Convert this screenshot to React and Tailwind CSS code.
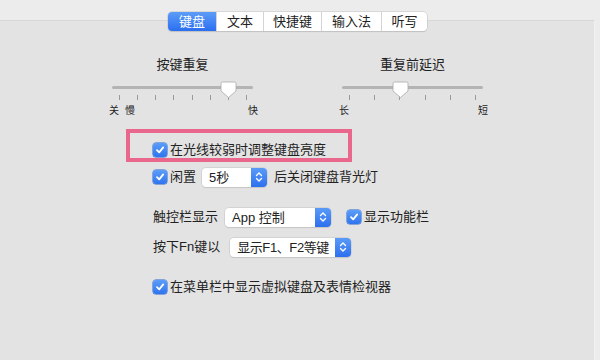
import React from "react";

const FONT = { fontFamily: '"Liberation Sans", "Noto Sans CJK SC", sans-serif' };

function Check() {
  return (
    <div className="w-[14px] h-[14px] rounded-[3px] bg-gradient-to-b from-[#5b9df9] to-[#2f74ee] flex items-center justify-center shrink-0 shadow-[0_0_0_0.5px_#2a64d0]">
      <svg width="10" height="10" viewBox="0 0 10 10">
        <path d="M2 5.2 L4.2 7.4 L8.2 2.4" fill="none" stroke="white" strokeWidth="1.8" strokeLinecap="round" strokeLinejoin="round" />
      </svg>
    </div>
  );
}

function Select({ label, width, tight }) {
  return (
    <div className={`h-[19px] rounded-[4px] bg-white flex items-stretch shadow-[0_0_0_0.5px_#c4c4c4,0_1px_1px_rgba(0,0,0,0.12)] ${width}`}>
      <div className={`flex-1 min-w-0 pl-[7px] flex items-center text-[13px] leading-[19px] text-[#222] whitespace-nowrap overflow-hidden ${tight ? "tracking-[-0.4px]" : ""}`}>{label}</div>
      <div className="w-[16px] shrink-0 rounded-r-[4px] bg-gradient-to-b from-[#5a9bf8] to-[#2c6fee] flex items-center justify-center">
        <svg width="8" height="12" viewBox="0 0 8 12">
          <path d="M1.5 4.5 L4 2 L6.5 4.5 M1.5 7.5 L4 10 L6.5 7.5" fill="none" stroke="white" strokeWidth="1.4" strokeLinecap="round" strokeLinejoin="round" />
        </svg>
      </div>
    </div>
  );
}

function Slider({ title, ticks, thumb, tickInset, left, right, extraLeft }) {
  return (
    <div className="w-[141px] flex flex-col">
      <div className="h-[18px] leading-[18px] text-[13px] text-center text-[#222]">{title}</div>
      <div className="relative h-[27px] mt-[4px]">
        <div className="absolute left-0 right-0 top-[8px] h-[3px] rounded-full bg-[#b4b4b4]" />
        <div className={`absolute top-[17px] h-[5px] flex justify-between ${tickInset}`}>
          {Array.from({ length: ticks }).map((_, i) => (
            <div key={i} className="w-[1px] h-[5px] bg-[#9a9a9a]" />
          ))}
        </div>
        <div className={`absolute top-[3px] ${thumb}`}>
          <svg width="17" height="18" viewBox="0 0 17 18">
            <path d="M1 2.5 Q1 1 2.5 1 H14.5 Q16 1 16 2.5 V10 L8.5 16.5 L1 10 Z" fill="white" stroke="#a9a9a9" strokeWidth="0.8" />
          </svg>
        </div>
      </div>
      <div className="h-[12px] leading-[12px] text-[10px] text-[#222] flex justify-between -ml-[3px] -mr-[5px]">
        <div className="flex gap-[6px]">
          <span>{left}</span>
          {extraLeft && <span>{extraLeft}</span>}
        </div>
        <span>{right}</span>
      </div>
    </div>
  );
}

export default function App() {
  const tabs = [
    { t: "键盘", w: "w-[48px]", a: true },
    { t: "文本", w: "w-[47px]" },
    { t: "快捷键", w: "w-[58px]" },
    { t: "输入法", w: "w-[60px]" },
    { t: "听写", w: "w-[46px]" },
  ];
  return (
    <div className="relative w-[600px] h-[360px] bg-[#ececec] overflow-hidden" style={FONT}>
      <div className="mt-[20px] w-[595px] h-[345px] bg-[#e3e3e3] border-t border-r border-t-[#d6d6d6] border-r-[#f2f2f2]">
        <div className="pt-[35px] pl-[112px] flex gap-[89px]">
          <Slider title="按键重复" ticks={8} thumb="left-[108px]" tickInset="left-[7px] right-[6px]" left="关" extraLeft="慢" right="快" />
          <Slider title="重复前延迟" ticks={6} thumb="left-[50px]" tickInset="left-[7px] right-[7px]" left="长" right="短" />
        </div>

        <div className="relative ml-[153px] mt-[23px] h-[20px] flex items-center gap-[3px] text-[13px] text-[#222]">
          <Check />
          <span className="leading-[20px]">在光线较弱时调整键盘亮度</span>
          <div className="absolute -left-[27px] -top-[11px] w-[226px] h-[33px] border-[4px] border-[#e9668c]" />
        </div>

        <div className="ml-[153px] mt-[7px] h-[20px] flex items-center text-[13px] text-[#222]">
          <Check />
          <span className="ml-[3px] leading-[20px]">闲置</span>
          <div className="ml-[6px]"><Select label="5秒" width="w-[65px]" /></div>
          <span className="ml-[7px] leading-[20px]">后关闭键盘背光灯</span>
        </div>

        <div className="ml-[153px] mt-[20px] h-[20px] flex items-center text-[13px] text-[#222]">
          <span className="leading-[20px]">触控栏显示</span>
          <div className="ml-[7px]"><Select label="App 控制" width="w-[106px]" /></div>
          <div className="ml-[16px]"><Check /></div>
          <span className="ml-[3px] leading-[20px]">显示功能栏</span>
        </div>

        <div className="ml-[153px] mt-[10px] h-[20px] flex items-center text-[13px] text-[#222]">
          <span className="leading-[20px] whitespace-nowrap">按下Fn键以</span>
          <div className="ml-[10px]"><Select label="显示F1、F2等键" width="w-[121px]" tight /></div>
        </div>

        <div className="ml-[153px] mt-[20px] h-[20px] flex items-center gap-[3px] text-[13px] text-[#222]">
          <Check />
          <span className="leading-[20px]">在菜单栏中显示虚拟键盘及表情检视器</span>
        </div>
      </div>

      <div className="absolute top-[12px] left-[168px] h-[19px] flex rounded-[4px] bg-white shadow-[0_0_0_0.5px_#c2c2c2,0_1px_1px_rgba(0,0,0,0.15)] overflow-hidden">
        {tabs.map((tab, i) => (
          <div
            key={i}
            className={`${tab.w} flex items-center justify-center text-[13px] leading-[19px] ${
              tab.a ? "bg-gradient-to-b from-[#5c9cf8] to-[#2b6ef0] text-white" : "text-[#222]"
            } ${i > 0 ? "border-l border-[#d4d4d4]" : ""}`}
          >
            {tab.t}
          </div>
        ))}
      </div>
    </div>
  );
}
